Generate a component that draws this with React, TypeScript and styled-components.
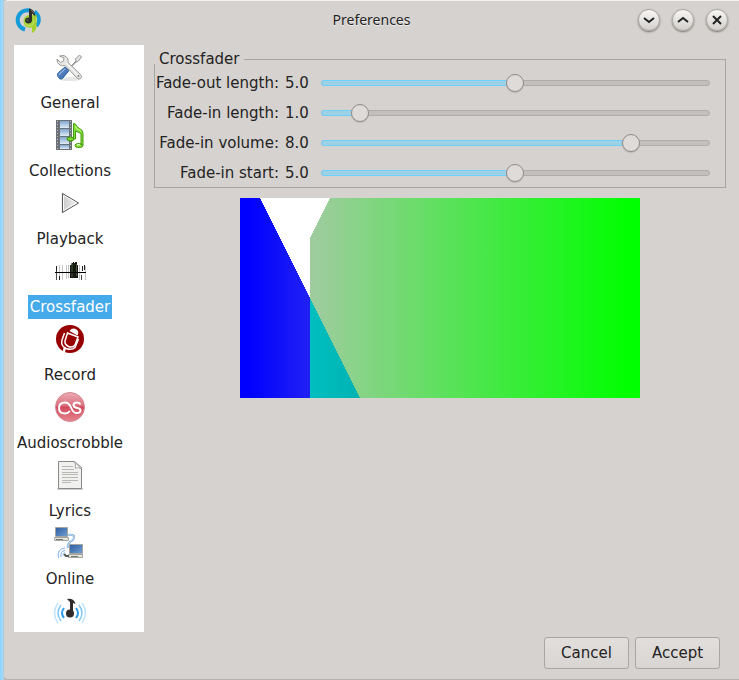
import React, { useState } from "react";
import styled, { createGlobalStyle } from "styled-components";

const colors = {
  window: "#d6d2cf",
  text: "#232323",
  line: "#a8a4a1",
  accent: "#45aae9",
};

const GlobalStyle = createGlobalStyle`
  * { box-sizing: border-box; }
  body {
    margin: 0;
    background: ${colors.window};
    color: ${colors.text};
    font: 15px/24px "DejaVu Sans", Verdana, sans-serif;
  }
`;

const Desktop = styled.div`
  height: 100vh;
  padding-left: 4px;
  background: linear-gradient(90deg, #8dd4fd 0, #a5dbfb 3px, #b3bcc2 4px);
`;

const Window = styled.div`
  height: 100%;
  display: flex;
  flex-direction: column;
  background: ${colors.window};
  border-top: 1px solid #f4f3f2;
  border-bottom: 1px solid #b5b0ae;
  border-radius: 4px 0 0 4px;
`;

const TitleBar = styled.header`
  display: grid;
  grid-template-columns: 120px 1fr 120px;
  align-items: center;
  height: 38px;
  flex: none;
`;

const AppIcon = styled.span`
  display: flex;
  padding-left: 12px;
`;

const Title = styled.h1`
  margin: 0;
  text-align: center;
  font: 14px/20px "Noto Sans", "Open Sans", sans-serif;
  text-shadow: 0 1px 0 #f2f0ef;
`;

const WindowControls = styled.div`
  display: flex;
  justify-content: flex-end;
  gap: 12px;
  padding-right: 11px;
`;

const RoundButton = styled.button`
  width: 22px;
  height: 22px;
  padding: 0;
  border: 1px solid #aaa6a3;
  border-radius: 50%;
  background: linear-gradient(#f8f7f6, #d2cfcc);
  box-shadow: 0 1px 2px #77736f;
  display: grid;
  place-items: center;
`;

const Body = styled.div`
  flex: 1;
  min-height: 0;
  display: flex;
  gap: 10px;
  padding: 6px 13px 0 10px;
`;

const CategoryList = styled.nav`
  flex: none;
  width: 130px;
  padding: 7px 18px 0 0;
  background: #fff;
  overflow: hidden;
`;

const Category = styled.button`
  width: 100%;
  display: flex;
  flex-direction: column;
  align-items: center;
  gap: 7px;
  margin: 0 0 5px;
  padding: 0;
  border: 0;
  background: none;
  color: inherit;
  font: inherit;
`;

const CategoryLabel = styled.span<{ $selected: boolean }>`
  padding: 0 2px;
  white-space: nowrap;
  background: ${(p) => (p.$selected ? colors.accent : "transparent")};
  color: ${(p) => (p.$selected ? "#fff" : "inherit")};
`;

const Icon = styled.svg`
  display: block;
  overflow: visible;
  fill: none;
`;

const Content = styled.main`
  flex: 1;
  min-width: 0;
  display: flex;
  flex-direction: column;
  align-items: center;
  gap: 10px;
  padding-top: 9px;
`;

const Group = styled.fieldset`
  width: 100%;
  min-width: 0;
  margin: 0;
  padding: 9px 15px 4px 0;
  border: 1px solid ${colors.line};
`;

const GroupTitle = styled.legend`
  margin-left: -1px;
  padding: 0 4px 0 5px;
  line-height: 10px;
  background: ${colors.window};
`;

const Rows = styled.div`
  display: grid;
  gap: 10px;
`;

const SettingRow = styled.div`
  display: grid;
  grid-template-columns: 124px 36px 1fr;
  align-items: center;
  height: 20px;
  line-height: 20px;
`;

const SettingLabel = styled.label`
  text-align: right;
  white-space: nowrap;
`;

const SettingValue = styled.output`
  padding-left: 6px;
`;

const Slider = styled.div`
  display: grid;
  align-items: center;
  margin-left: 6px;
  & > * { grid-area: 1 / 1; }
`;

const Rail = styled.div`
  height: 6px;
  border: 1px solid #b0acaa;
  border-radius: 3px;
  background: #c3bfbd;
`;

const Fill = styled.div`
  height: 6px;
  border: 1px solid #6fd0f9;
  border-radius: 3px;
  background: #9dd1e5;
`;

const Range = styled.input`
  appearance: none;
  height: 20px;
  margin: 0 -8px 0 -9px;
  background: none;
  &::-webkit-slider-thumb {
    appearance: none;
    width: 18px;
    height: 18px;
    border: 1px solid #8f8b88;
    border-radius: 50%;
    background: #dedbd8;
    box-shadow: 0 1px 1px #bcb8b5;
  }
`;

const Footer = styled.footer`
  flex: none;
  display: flex;
  justify-content: flex-end;
  gap: 6px;
  padding: 5px 19px 10px;
`;

const PushButton = styled.button`
  width: 85px;
  height: 32px;
  padding: 0;
  border: 1px solid #aaa6a3;
  border-radius: 3px;
  background: linear-gradient(#e1dedc, #d9d5d2);
  color: inherit;
  font: inherit;
`;

const Logo = () => (
  <Icon width="25" height="27" viewBox="0 0 25 27">
    <path d="M14 3.500A9.500 9.500 0 0 0 9 22.500" stroke="#159bd7" strokeWidth="4" />
    <path d="M18.500 4.500a9.500 9.500 0 0 1 2 14.500" stroke="#159bd7" strokeWidth="3.500" />
    <path d="M20.500 8v10q0 6.500-4.500 8V20.500q-8 1-8.500-6 0-6 6-6.500z" fill="#a3d132" />
    <path d="M9.500 15q.5 4 4.500 3.500 4-.5 4-5.500" stroke="#c6e56e" />
    <path d="M13 1.500q5.500.5 6.500 8l-3.500-3v7q-.5 3-3.500 3-3.500 0-3.500-3 0-3 4-3z" fill="#30302b" />
    <path d="m15 3 3 3M10.500 13h2" stroke="#77756f" />
  </Icon>
);

const icons: Record<string, React.ReactNode> = {
  General: (
    <>
      <defs>
        <linearGradient id="handle" x1="0" y1="0" x2="1" y2="1">
          <stop stopColor="#7ba7dc" /><stop offset="1" stopColor="#28569b" />
        </linearGradient>
      </defs>
      <ellipse cx="16" cy="27" rx="11" ry="2" fill="#e6e6e6" />
      <path d="m14 17 8-8-.5-2 4-4 2 2-3.500 4.500-2 .5-7 8z" fill="#e4e5e4" stroke="#92938f" />
      <path d="M3.500 23.500q-.5-1.500 1-3L11 15l4 3.500-6.500 8q-3 2-5-3z" fill="url(#handle)" stroke="#3465a4" />
      <path d="m5 22.500 6-5.500" stroke="#a7c5eb" />
      <path d="M5.500 4q5-2 8 2 1 2 .5 4.500l12.500 12q2 2 .5 3.500-2 2-4 0L11 13.500q-5 1-7.500-3L3 7l3.500 3.500 3-1.500.5-3z" fill="#e8e9e7" stroke="#999b97" />
      <path d="m12 11 12.500 12.500" stroke="#fff" />
      <circle cx="24.500" cy="24" r="1" fill="#888a85" />
    </>
  ),
  Collections: (
    <>
      <defs>
        <linearGradient id="frame" x1="0" y1="0" x2="0" y2="1">
          <stop stopColor="#7ea6d1" /><stop offset="1" stopColor="#e1ebf5" />
        </linearGradient>
      </defs>
      <path d="M2 0h16v30H2z" fill="#6b7176" />
      {[1, 9, 17, 25].map((y, i) => (
        <rect key={y} x="6" y={y} width="9" height={i === 3 ? 4 : 7} fill="url(#frame)" />
      ))}
      <path d="M3.500 1v29M16.500 1v29" stroke="#b4b9bc" strokeDasharray="1 2" />
      <ellipse cx="16.500" cy="19" rx="3.500" ry="2" fill="#77d52d" stroke="#3d9409" />
      <ellipse cx="25" cy="25.500" rx="4" ry="2" fill="#94e745" stroke="#3d9409" />
      <path d="M19.500 19V3.500l2 .5q1 3 4 4.500 3.500 1.500 3.500 5V25h-2V13.500L21.500 11v8z" fill="#82df39" stroke="#429b0d" />
      <path d="m21.500 6 1.500 3 4 2" stroke="#c9ff89" />
      <path d="m23 25 3-1" stroke="#edffce" />
    </>
  ),
  Playback: (
    <>
      <defs>
        <linearGradient id="play"><stop stopColor="#c9c9c9" /><stop offset="1" stopColor="#f4f4f4" /></linearGradient>
      </defs>
      <path d="M7 4v22l19-11z" fill="#f2f2f2" />
      <path d="M8.500 5.500v19l16-9.500z" fill="url(#play)" stroke="#595959" />
      <path d="M9.500 7.500v15L22.500 15z" stroke="#fafafa" />
    </>
  ),
  Crossfader: (
    <>
      <path d="M2.500 10v14M27.500 19v5" stroke="#4b4b4b" />
      <path d="M5.500 9v14M8.500 9v15M12.500 9v14M14.500 9v13M25.500 9v15M31.500 10v14" stroke="#c6c6c6" />
      <path d="M2.500 10v5M30.500 9v5M5.500 20v4M28.500 10v5" stroke="#222" />
      <path d="M16 9h1.500V7H19V6h1v1h1V6h2v3h1v13h-8z" fill="#151a10" />
      <path d="M18 8v13M22.500 8v12" stroke="#46523b" />
      <path d="M1 16.500h31" stroke="#000" />
    </>
  ),
  Record: (
    <>
      <circle cx="16" cy="15" r="14" fill="#970000" />
      <path d="M15.500 7q3-4 7-1.500 3 2 1 6z" fill="#fff" />
      <path d="m13.500 9 10.500 4-3 8q-2 3-6.500 1.500-4-2-3.500-5.500z" stroke="#fff" strokeWidth="1.500" />
      <path d="M10.500 9 8 16q-1.500 6 4 8.500 6 2 9-1L24.500 15" stroke="#fff" strokeWidth="1.500" />
      <path d="m11 23-1.500 6" stroke="#fff" strokeWidth="2.500" />
    </>
  ),
  Audioscrobble: (
    <>
      <defs>
        <linearGradient id="scrobble" x1="0" y1="0" x2="0" y2="1">
          <stop stopColor="#ecabb3" /><stop offset=".45" stopColor="#d9717e" />
          <stop offset=".5" stopColor="#d04a5c" /><stop offset="1" stopColor="#e5868e" />
        </linearGradient>
      </defs>
      <circle cx="16" cy="15" r="14.500" fill="url(#scrobble)" stroke="#d58791" />
      <path d="M16 19q-2 2.500-5 2.500-6 0-6-5.500t6-5.500q4 0 6 5t5 5.500q4.500 0 4.500-2.500 0-2-3-2.500-4-.5-4-3t3.500-2.500q2.500 0 3.500 2" stroke="#fff" strokeWidth="2" />
    </>
  ),
  Lyrics: (
    <>
      <path d="M3 29h26" stroke="#cfcfcf" strokeWidth="2" />
      <path d="M4.500 1.500h16l7 6v21h-23z" fill="#f1f2ef" stroke="#888a85" />
      <path d="M20.500 2q2 3 .5 6 4-1 6.500 1z" fill="#fff" stroke="#a7a9a4" />
      <path d="M8 6.500h11M8 9.500h12M8 12.500h16M8 14.500h16M8 17.500h16M8 20.500h16M8 22.500h9" stroke="#b7b8b4" />
    </>
  ),
  Online: (
    <>
      <defs>
        <linearGradient id="screen" x1="0" y1="0" x2="1" y2="1">
          <stop stopColor="#2b5ba2" /><stop offset="1" stopColor="#739fd2" />
        </linearGradient>
      </defs>
      <path d="M14 7q7-1 6 3-.5 2-4 4-3 3-2 6" stroke="#79a8d9" strokeWidth="2" />
      <path d="M14 7q7-1 6 3-.5 2-4 4-3 3-2 6" stroke="#c8dff2" />
      <path d="M1.500-.5h12v9h-12z" fill="url(#screen)" stroke="#a4a59e" />
      <path d="M.5 9.500h14v3H.5z" fill="#e4e5dc" stroke="#a3a49e" />
      <path d="M2 11.500h7" stroke="#777971" />
      <path d="M15.500 16.500h13v9h-13z" fill="url(#screen)" stroke="#a4a59e" />
      <path d="M14.500 26.500h14v3h-14z" fill="#e4e5dc" stroke="#a3a49e" />
      <path d="M17 28.500h7" stroke="#777971" />
      <path d="m10 26 2 2h3" stroke="#555753" strokeWidth="2" />
      <path d="M4.500 30q-2-9 6.500-10M7 29q-1-6 4-6.500" stroke="#7eafe1" />
      <path d="M9 28q-1-3 2-3.500" stroke="#a7caeb" />
    </>
  ),
  Plugins: (
    <>
      <path d="M4 7q-7 10 0 20M28 7q7 10 0 20" stroke="#c0e4fb" strokeWidth="1.500" />
      <path d="M7 9q-6 8 0 16M25 9q6 8 0 16" stroke="#82c8f7" strokeWidth="1.500" />
      <path d="M10 12q-4 5 0 10M22 12q4 5 0 10" stroke="#2c9cef" strokeWidth="2" />
      <circle cx="16" cy="17.500" r="4" fill="#302c2b" />
      <path d="M13 3q7-1 8.500 5l-2.500-1v10h-3V6z" fill="#302c2b" />
    </>
  ),
};

const categories = [
  "General", "Collections", "Playback", "Crossfader", "Record",
  "Audioscrobble", "Lyrics", "Online", "Plugins",
];

const settings = [
  { id: "fade-out-length", label: "Fade-out length:", value: 5 },
  { id: "fade-in-length", label: "Fade-in length:", value: 1 },
  { id: "fade-in-volume", label: "Fade-in volume:", value: 8 },
  { id: "fade-in-start", label: "Fade-in start:", value: 5 },
];

const controls = [
  { name: "Minimize", path: "m1 4 5 4 5-4" },
  { name: "Maximize", path: "m1 8 5-4 5 4" },
  { name: "Close", path: "m2 2 8 8M10 2l-8 8" },
];

const FadeGraph = () => (
  <Icon width="400" height="200" viewBox="0 0 400 200" shapeRendering="crispEdges" role="img" aria-label="Crossfade preview">
    <defs>
      <linearGradient id="fadeOut" gradientUnits="userSpaceOnUse" x1="8" x2="120">
        <stop stopColor="#00f" /><stop offset="1" stopColor="#3b3bec" />
      </linearGradient>
      <linearGradient id="fadeIn" gradientUnits="userSpaceOnUse" x1="70" x2="390">
        <stop stopColor="#a0cba0" /><stop offset="1" stopColor="#0f0" />
      </linearGradient>
      <linearGradient id="overlap">
        <stop stopColor="#00bfbf" /><stop offset="1" stopColor="#00b2b2" />
      </linearGradient>
    </defs>
    <path d="M0 0h400v200H0z" fill="#fff" />
    <path d="M0 0h20l100 200H0z" fill="url(#fadeOut)" />
    <path d="M70 200V40L90 0h310v200z" fill="url(#fadeIn)" />
    <path d="M70 100v100h50z" fill="url(#overlap)" />
  </Icon>
);

export default function App() {
  const [selected, setSelected] = useState("Crossfader");
  const [values, setValues] = useState(settings.map((s) => s.value));

  return (
    <Desktop>
      <GlobalStyle />
      <Window>
        <TitleBar>
          <AppIcon><Logo /></AppIcon>
          <Title>Preferences</Title>
          <WindowControls>
            {controls.map((c) => (
              <RoundButton key={c.name} type="button" aria-label={c.name}>
                <Icon width="12" height="12" viewBox="0 0 12 12" stroke="#232323" strokeWidth="2">
                  <path d={c.path} />
                </Icon>
              </RoundButton>
            ))}
          </WindowControls>
        </TitleBar>
        <Body>
          <CategoryList>
            {categories.map((name) => (
              <Category key={name} type="button" aria-label={name} onClick={() => setSelected(name)}>
                <Icon width="32" height="32" viewBox="0 0 32 32">{icons[name]}</Icon>
                {name !== "Plugins" && (
                  <CategoryLabel $selected={name === selected}>{name}</CategoryLabel>
                )}
              </Category>
            ))}
          </CategoryList>
          <Content>
            <Group>
              <GroupTitle>Crossfader</GroupTitle>
              <Rows>
                {settings.map((s, i) => (
                  <SettingRow key={s.id}>
                    <SettingLabel htmlFor={s.id}>{s.label}</SettingLabel>
                    <SettingValue htmlFor={s.id}>{values[i].toFixed(1)}</SettingValue>
                    <Slider>
                      <Rail />
                      <Fill style={{ width: `${values[i] * 10}%` }} />
                      <Range
                        id={s.id}
                        type="range"
                        min={0}
                        max={10}
                        step={0.1}
                        value={values[i]}
                        onChange={(e) =>
                          setValues(values.map((v, j) => (j === i ? Number(e.target.value) : v)))
                        }
                      />
                    </Slider>
                  </SettingRow>
                ))}
              </Rows>
            </Group>
            <FadeGraph />
          </Content>
        </Body>
        <Footer>
          <PushButton type="button">Cancel</PushButton>
          <PushButton type="button">Accept</PushButton>
        </Footer>
      </Window>
    </Desktop>
  );
}
